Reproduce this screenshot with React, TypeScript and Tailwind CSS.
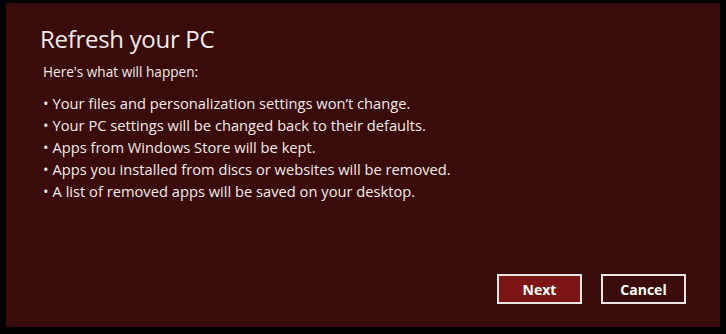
import React from "react";

const bullets = [
  "Your files and personalization settings won\u2019t change.",
  "Your PC settings will be changed back to their defaults.",
  "Apps from Windows Store will be kept.",
  "Apps you installed from discs or websites will be removed.",
  "A list of removed apps will be saved on your desktop.",
];

export default function App() {
  return (
    <div
      className="w-[726px] h-[334px] bg-black pt-[3px] pl-[6px] pr-[6px] pb-[7px]"
      style={{ fontFamily: '"Open Sans", "Noto Sans", sans-serif' }}
    >
      <div className="h-full w-full bg-[#3a0b0b] flex flex-col text-[#f2eaea]">
        <div className="pl-[34px] pt-[20px] text-[24px] leading-[32px] tracking-[-0.3px]">
          Refresh your PC
        </div>
        <div className="pl-[37px] pt-[6px] text-[13.6px] leading-[22px]">
          Here's what will happen:
        </div>
        <ul className="pl-[37px] pt-[9px] text-[14.7px] leading-[22px]">
          {bullets.map((b) => (
            <li key={b}>
              <span className="mr-[4px]">•</span>
              {b}
            </li>
          ))}
        </ul>
        <div className="mt-auto flex justify-end gap-[19px] pr-[34px] pb-[23px]">
          <button className="w-[85px] h-[30px] border-2 border-[#ece4e4] bg-[#7c1515] text-[14px] font-bold text-white">
            Next
          </button>
          <button className="w-[85px] h-[30px] border-2 border-[#ece4e4] bg-[#3a0b0b] text-[14px] font-bold text-white">
            Cancel
          </button>
        </div>
      </div>
    </div>
  );
}
